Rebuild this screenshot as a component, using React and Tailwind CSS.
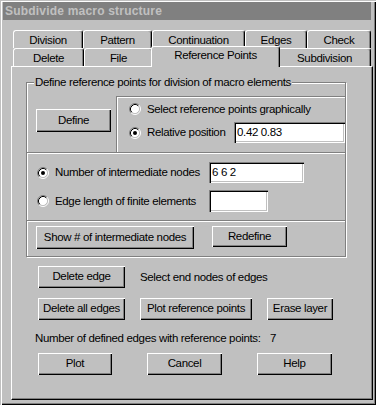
import React from "react";

const FONT = "font-['Liberation_Sans',Arial,sans-serif] text-[11.5px] leading-[13px] tracking-[-0.35px] text-black whitespace-nowrap";

function Btn({ w, h = 22, children }) {
  return (
    <div
      className={`flex items-center justify-center bg-[#c0c0c0] shadow-[inset_1px_1px_0_#fff,inset_-1px_-1px_0_#000,inset_-2px_-2px_0_#808080] pb-[1px] shrink-0`}
      style={{ width: w, height: h }}
    >
      {children}
    </div>
  );
}

function Radio({ checked }) {
  return (
    <svg width="12" height="12" viewBox="0 0 12 12" className="shrink-0">
      <circle cx="6" cy="6" r="4.5" fill="#fff" />
      <path d="M2.11 9.89 A5.5 5.5 0 0 1 9.89 2.11" stroke="#808080" strokeWidth="1" fill="none" />
      <path d="M9.89 2.11 A5.5 5.5 0 0 1 2.11 9.89" stroke="#fff" strokeWidth="1" fill="none" />
      <path d="M2.82 9.18 A4.5 4.5 0 0 1 9.18 2.82" stroke="#000" strokeWidth="1" fill="none" />
      <path d="M9.18 2.82 A4.5 4.5 0 0 1 2.82 9.18" stroke="#c0c0c0" strokeWidth="1" fill="none" />
      {checked && <circle cx="6" cy="6" r="2" fill="#000" />}
    </svg>
  );
}

function Input({ w, h, value }) {
  return (
    <div
      className="bg-white flex items-center pl-[3px] shrink-0 shadow-[inset_1px_1px_0_#808080,inset_2px_2px_0_#000,inset_-1px_-1px_0_#fff,inset_-2px_-2px_0_#c0c0c0]"
      style={{ width: w, height: h }}
    >
      {value}
    </div>
  );
}

function Tab({ w, children, selected }) {
  return (
    <div
      className={`flex items-center justify-center bg-[#c0c0c0] border-l border-t border-r border-l-white border-t-white border-r-black rounded-tl-[3px] rounded-tr-[3px] shadow-[inset_-1px_0_0_#808080] shrink-0 ${
        selected ? "relative z-10 -mt-[2px] -mx-[2px] h-[21px] pb-[4px]" : "h-[18px] pt-[1px]"
      }`}
      style={{ width: w }}
    >
      {children}
    </div>
  );
}

export default function App() {
  return (
    <div className={`w-[377px] h-[409px] bg-white ${FONT}`}>
      <div className="w-[376px] h-[405px] bg-[#c0c0c0] flex flex-col pt-[2px] pl-[3px] shadow-[inset_1px_1px_0_#c0c0c0,inset_2px_2px_0_#fff,inset_-1px_-1px_0_#000,inset_-2px_-2px_0_#808080]">
        {/* Title bar */}
        <div className="w-[368px] h-[18px] bg-[#808080] flex items-center pl-[2px]">
          <span className="font-bold text-[12px] text-[#c0c0c0] tracking-[0.2px]">
            Subdivide macro structure
          </span>
        </div>

        {/* Tabs + panel */}
        <div className="ml-[8px] mt-[10px] flex flex-col">
          <div className="flex ml-[2px] h-[18px]">
            <Tab w={70}>Division</Tab>
            <Tab w={69}>Pattern</Tab>
            <Tab w={93}>Continuation</Tab>
            <Tab w={62}>Edges</Tab>
            <Tab w={64}>Check</Tab>
          </div>
          <div className="flex ml-[2px] h-[18px] items-start">
            <Tab w={71}>Delete</Tab>
            <Tab w={69}>File</Tab>
            <Tab w={129} selected>Reference Points</Tab>
            <Tab w={93}>Subdivision</Tab>
          </div>

          {/* Panel */}
          <div className="w-[362px] h-[334px] border border-l-white border-t-white border-r-black border-b-black shadow-[inset_-1px_-1px_0_#808080] pl-[14px] pt-[15px] flex flex-col">
            {/* Group box */}
            <div className="relative w-[320px] h-[175px] border border-[#808080] shadow-[1px_1px_0_#fff,inset_1px_1px_0_#fff] flex flex-col">
              <span className="absolute -top-[7px] left-[7px] px-[1px] bg-[#c0c0c0] leading-[13px]">
                Define reference points for division of macro elements
              </span>

              {/* Section 1 */}
              <div className="h-[69px] flex">
                <div className="w-[89px] pl-[9px] pt-[26px]">
                  <Btn w={75} h={23}>Define</Btn>
                </div>
                <div className="mt-[13px] flex-1 border-t border-l border-[#808080] shadow-[inset_1px_1px_0_#fff] pt-[6px] pl-[12px] flex flex-col">
                  <div className="flex items-center h-[12px] gap-[6px]">
                    <Radio />
                    <span>Select reference points graphically</span>
                  </div>
                  <div className="flex items-center h-[21px] mt-[7px]">
                    <Radio checked />
                    <span className="ml-[6px]">Relative position</span>
                    <div className="ml-auto">
                      <Input w={111} h={21} value="0.42 0.83" />
                    </div>
                  </div>
                </div>
              </div>

              {/* Section 2 */}
              <div className="h-[68px] border-t border-[#808080] shadow-[inset_0_1px_0_#fff] pt-[9px] pl-[10px] flex flex-col">
                <div className="flex items-center h-[21px]">
                  <Radio checked />
                  <span className="ml-[6px] w-[154px]">Number of intermediate nodes</span>
                  <Input w={95} h={21} value="6 6 2" />
                </div>
                <div className="flex items-center h-[22px] mt-[7px]">
                  <Radio />
                  <span className="ml-[6px] w-[154px]">Edge length of finite elements</span>
                  <Input w={59} h={22} value="" />
                </div>
              </div>

              {/* Section 3 */}
              <div className="flex-1 border-t border-[#808080] shadow-[inset_0_1px_0_#fff] pt-[5px] pl-[9px] flex items-start gap-[18px]">
                <Btn w={158} h={23}>Show # of intermediate nodes</Btn>
                <Btn w={75} h={21}>Redefine</Btn>
              </div>
            </div>

            {/* Below group */}
            <div className="flex items-center mt-[9px] ml-[12px]">
              <Btn w={87}>Delete edge</Btn>
              <span className="ml-[15px]">Select end nodes of edges</span>
            </div>
            <div className="flex items-center mt-[10px] ml-[12px] gap-[15px]">
              <Btn w={87}>Delete all edges</Btn>
              <Btn w={112}>Plot reference points</Btn>
              <Btn w={66}>Erase layer</Btn>
            </div>
            <div className="flex mt-[12px] ml-[9px]">
              <span className="w-[235px]">Number of defined edges with reference points:</span>
              <span>7</span>
            </div>
            <div className="flex items-center mt-[8px] ml-[12px] gap-[35px]">
              <Btn w={74}>Plot</Btn>
              <Btn w={75}>Cancel</Btn>
              <Btn w={75}>Help</Btn>
            </div>
          </div>
        </div>
      </div>
    </div>
  );
}
